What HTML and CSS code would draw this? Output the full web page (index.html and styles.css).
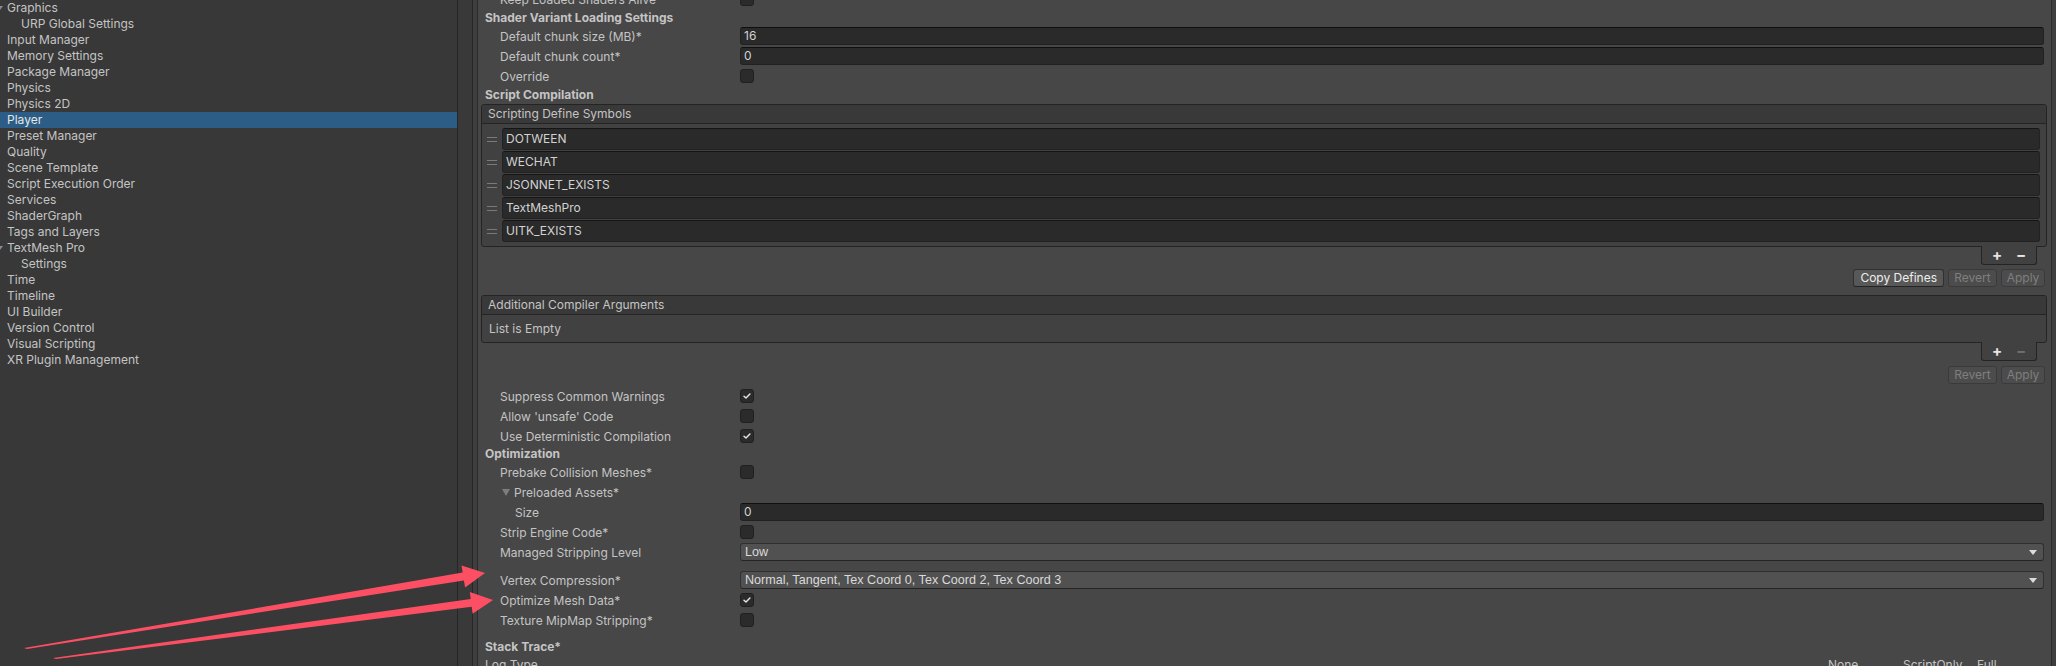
FILE: index.html
```html
<!DOCTYPE html>
<html>
<head>
<meta charset="utf-8">
<link rel="stylesheet" href="styles.css">
</head>
<body>
<div class="window">
  <nav class="sidebar">
    <div class="tree-item open">Graphics</div>
    <div class="tree-item child">URP Global Settings</div>
    <div class="tree-item">Input Manager</div>
    <div class="tree-item">Memory Settings</div>
    <div class="tree-item">Package Manager</div>
    <div class="tree-item">Physics</div>
    <div class="tree-item">Physics 2D</div>
    <div class="tree-item selected">Player</div>
    <div class="tree-item">Preset Manager</div>
    <div class="tree-item">Quality</div>
    <div class="tree-item">Scene Template</div>
    <div class="tree-item">Script Execution Order</div>
    <div class="tree-item">Services</div>
    <div class="tree-item">ShaderGraph</div>
    <div class="tree-item">Tags and Layers</div>
    <div class="tree-item open">TextMesh Pro</div>
    <div class="tree-item child">Settings</div>
    <div class="tree-item">Time</div>
    <div class="tree-item">Timeline</div>
    <div class="tree-item">UI Builder</div>
    <div class="tree-item">Version Control</div>
    <div class="tree-item">Visual Scripting</div>
    <div class="tree-item">XR Plugin Management</div>
  </nav>
  <div class="splitter"><div class="split-a"></div><div class="split-b"></div></div>
  <main class="inspector">
    <div class="content">
      <div class="row"><div class="label ind">Keep Loaded Shaders Alive*</div><div class="value"><span class="checkbox"></span></div></div>
      <div class="section h17">Shader Variant Loading Settings</div>
      <div class="row"><div class="label ind">Default chunk size (MB)*</div><div class="value"><div class="textfield">16</div></div></div>
      <div class="row"><div class="label ind">Default chunk count*</div><div class="value"><div class="textfield">0</div></div></div>
      <div class="row"><div class="label ind">Override</div><div class="value"><span class="checkbox"></span></div></div>
      <div class="section">Script Compilation</div>

      <div class="list-box">
        <div class="list-header">Scripting Define Symbols</div>
        <div class="list-body">
          <div class="list-item"><span class="handle"></span><div class="item-field">DOTWEEN</div></div>
          <div class="list-item"><span class="handle"></span><div class="item-field">WECHAT</div></div>
          <div class="list-item"><span class="handle"></span><div class="item-field">JSONNET_EXISTS</div></div>
          <div class="list-item"><span class="handle"></span><div class="item-field">TextMeshPro</div></div>
          <div class="list-item"><span class="handle"></span><div class="item-field">UITK_EXISTS</div></div>
        </div>
      </div>
      <div class="footer-row"><div class="list-footer"><span class="fbtn">+</span><span class="fbtn">−</span></div></div>
      <div class="button-row">
        <span class="btn">Copy Defines</span>
        <span class="btn disabled w-revert">Revert</span>
        <span class="btn disabled w-apply">Apply</span>
      </div>

      <div class="list-box second">
        <div class="list-header">Additional Compiler Arguments</div>
        <div class="list-empty">List is Empty</div>
      </div>
      <div class="footer-row"><div class="list-footer"><span class="fbtn">+</span><span class="fbtn dim">−</span></div></div>
      <div class="button-row second">
        <span class="btn disabled w-revert">Revert</span>
        <span class="btn disabled w-apply">Apply</span>
      </div>

      <div class="row first-after"><div class="label ind">Suppress Common Warnings</div><div class="value"><span class="checkbox checked"><svg viewBox="0 0 14 14"><path d="M3.5 7.2 L5.8 9.4 L10.4 4.6"/></svg></span></div></div>
      <div class="row"><div class="label ind">Allow 'unsafe' Code</div><div class="value"><span class="checkbox"></span></div></div>
      <div class="row"><div class="label ind">Use Deterministic Compilation</div><div class="value"><span class="checkbox checked"><svg viewBox="0 0 14 14"><path d="M3.5 7.2 L5.8 9.4 L10.4 4.6"/></svg></span></div></div>
      <div class="section h16">Optimization</div>
      <div class="row"><div class="label ind">Prebake Collision Meshes*</div><div class="value"><span class="checkbox"></span></div></div>
      <div class="row"><div class="label ind foldout"><span class="fold-arrow"></span>Preloaded Assets*</div></div>
      <div class="row"><div class="label ind2">Size</div><div class="value"><div class="textfield">0</div></div></div>
      <div class="row"><div class="label ind">Strip Engine Code*</div><div class="value"><span class="checkbox"></span></div></div>
      <div class="row"><div class="label ind">Managed Stripping Level</div><div class="value"><div class="dropdown">Low<span class="dd-arrow"></span></div></div></div>
      <div class="row gap8"><div class="label ind">Vertex Compression*</div><div class="value"><div class="dropdown">Normal, Tangent, Tex Coord 0, Tex Coord 2, Tex Coord 3<span class="dd-arrow"></span></div></div></div>
      <div class="row"><div class="label ind">Optimize Mesh Data*</div><div class="value"><span class="checkbox checked"><svg viewBox="0 0 14 14"><path d="M3.5 7.2 L5.8 9.4 L10.4 4.6"/></svg></span></div></div>
      <div class="row"><div class="label ind">Texture MipMap Stripping*</div><div class="value"><span class="checkbox"></span></div></div>
      <div class="section gap8">Stack Trace*</div>
      <div class="row logtype"><div class="label">Log Type</div><div class="log-cols"><span class="lc none">None</span><span class="lc script">ScriptOnly</span><span class="lc full">Full</span></div></div>
    </div>
  </main>
  <div class="right-edge"></div>
</div>

<svg class="annotations" width="2056" height="666" viewBox="0 0 2056 666">
  <polygon points="24,648 462.7,572.6 461.5,565.6 485,573 465.1,587.4 463.9,580.4 27,649"/>
  <polygon points="53,658 470.7,599 469.8,592 493,600 472.6,613.8 471.7,606.8 56,659"/>
</svg>
</body>
</html>
```

FILE: styles.css
```css
* { box-sizing: border-box; }

html, body {
  margin: 0;
  padding: 0;
}

body {
  width: 2056px;
  height: 666px;
  overflow: hidden;
  position: relative;
  background: #474747;
  font-family: Inter, "Noto Sans", sans-serif;
  font-size: 12px;
  color: #c4c4c4;
}

.window {
  display: flex;
  height: 666px;
}

/* ---------- sidebar ---------- */
.sidebar {
  flex: none;
  width: 457px;
  background: #383838;
}

.tree-item {
  position: relative;
  height: 16px;
  line-height: 16px;
  padding-left: 7px;
  white-space: nowrap;
}

.tree-item.child { padding-left: 21px; }

.tree-item.selected {
  background: #2c5d87;
  color: #e6e6e6;
}

.tree-item.open::before {
  content: "";
  position: absolute;
  left: -3px;
  top: 6px;
  border-left: 3px solid transparent;
  border-right: 3px solid transparent;
  border-top: 4px solid #8c8c8c;
}

/* ---------- splitter ---------- */
.splitter {
  flex: none;
  display: flex;
}

.split-a {
  width: 16px;
  background: #393939;
  border-left: 1px solid #262626;
  border-right: 1px solid #262626;
}

.split-b {
  width: 5px;
  background: #3f3f3f;
  border-right: 1px solid #2a2a2a;
}

.right-edge {
  flex: none;
  width: 5px;
  background: #3e3e3e;
  border-left: 1px solid #2b2b2b;
}

/* ---------- inspector ---------- */
.inspector {
  flex: 1;
  min-width: 0;
  padding: 0 7px;
  overflow: hidden;
}

.content {
  margin-top: -11px;
  display: flex;
  flex-direction: column;
}

.row {
  display: flex;
  align-items: center;
  height: 20px;
  flex: none;
}

.label {
  flex: none;
  width: 255px;
  white-space: nowrap;
}

.label.ind { padding-left: 15px; }
.label.ind2 { padding-left: 30px; }

.label.foldout {
  display: flex;
  align-items: center;
  padding-left: 17px;
}

.fold-arrow {
  width: 0;
  height: 0;
  margin-right: 4px;
  border-left: 4px solid transparent;
  border-right: 4px solid transparent;
  border-top: 7px solid #7d7d7d;
}

.value {
  flex: 1;
  min-width: 0;
  display: flex;
  align-items: center;
}

.section {
  height: 18px;
  line-height: 18px;
  font-weight: 700;
  flex: none;
}

.section.h17 { height: 17px; line-height: 17px; }
.section.h16 { height: 16px; line-height: 16px; }

.gap8 { margin-top: 8px; }
.first-after { margin-top: 2px; }

.textfield {
  flex: 1;
  height: 18px;
  line-height: 16px;
  padding: 0 3px;
  background: #2a2a2a;
  border: 1px solid #212121;
  border-top-color: #0f0f0f;
  border-radius: 3px;
  color: #d2d2d2;
}

.checkbox {
  display: block;
  width: 14px;
  height: 14px;
  background: #2b2b2b;
  border: 1px solid #202020;
  border-radius: 3px;
}

.checkbox svg {
  display: block;
  width: 12px;
  height: 12px;
}

.checkbox svg path {
  fill: none;
  stroke: #e4e4e4;
  stroke-width: 1.7;
  stroke-linecap: round;
  stroke-linejoin: round;
}

.dropdown {
  position: relative;
  flex: 1;
  height: 18px;
  line-height: 16px;
  padding: 0 4px;
  background: #515151;
  border: 1px solid #303030;
  border-bottom-color: #242424;
  border-radius: 3px;
  color: #dadada;
  font-family: "Liberation Sans", Arial, sans-serif;
  font-size: 12.6px;
  white-space: nowrap;
}

.dd-arrow {
  position: absolute;
  right: 6px;
  top: 6px;
  border-left: 4px solid transparent;
  border-right: 4px solid transparent;
  border-top: 5px solid #dcdcdc;
}

/* ---------- reorderable list ---------- */
.list-box {
  flex: none;
  margin: 0 -3px 0 -4px;
  border: 1px solid #242424;
  border-radius: 3px;
  background: #414141;
}

.list-header {
  height: 19px;
  line-height: 18px;
  padding-left: 6px;
  background: #393939;
  border-bottom: 1px solid #242424;
  border-radius: 3px 3px 0 0;
}

.list-body {
  padding: 4px 6px 4px 0;
  display: flex;
  flex-direction: column;
  gap: 1px;
}

.list-item {
  display: flex;
  align-items: center;
  height: 22px;
}

.handle {
  flex: none;
  width: 10px;
  height: 5px;
  margin: 0 5px 0 5px;
  border-top: 1px solid #7a7a7a;
  border-bottom: 1px solid #7a7a7a;
}

.item-field {
  flex: 1;
  height: 22px;
  line-height: 20px;
  padding: 0 3px;
  background: #2a2a2a;
  border: 1px solid #222222;
  border-top-color: #151515;
  border-radius: 3px;
  color: #d2d2d2;
}

.list-empty {
  height: 27px;
  line-height: 27px;
  padding-left: 7px;
}

.footer-row {
  display: flex;
  justify-content: flex-end;
  margin-top: -1px;
  flex: none;
}

.list-footer {
  display: flex;
  width: 56px;
  height: 19px;
  margin-right: 7px;
  padding: 0 3px;
  background: #414141;
  border: 1px solid #242424;
  border-top: none;
  border-radius: 0 0 3px 3px;
}

.fbtn {
  width: 25px;
  text-align: center;
  line-height: 18px;
  font-size: 15px;
  font-weight: 700;
  color: #e6e6e6;
}

.fbtn.dim { color: #6f6f6f; }

.button-row {
  display: flex;
  justify-content: flex-end;
  gap: 4px;
  margin: 4px -1px 0 0;
  flex: none;
}

.button-row.second { margin-top: 5px; }

.list-box.second { margin-top: 8px; }

.btn {
  height: 18px;
  line-height: 16px;
  padding: 0 6px;
  background: #585858;
  border: 1px solid #303030;
  border-bottom-color: #242424;
  border-radius: 3px;
  color: #eeeeee;
  text-align: center;
  white-space: nowrap;
}

.btn.disabled {
  background: #4c4c4c;
  border-color: #3a3a3a;
  color: #7f7f7f;
}

.btn.w-revert { width: 49px; padding: 0; }
.btn.w-apply { width: 44px; padding: 0; }

/* ---------- log type ---------- */
.logtype { height: 16px; }

.log-cols {
  display: flex;
  margin-left: auto;
  padding-right: 47px;
}

.lc { white-space: nowrap; }
.lc.none { width: 75px; }
.lc.script { width: 74px; }
.lc.full { width: 20px; }

/* ---------- annotations ---------- */
.annotations {
  position: absolute;
  left: 0;
  top: 0;
  pointer-events: none;
}

.annotations polygon {
  fill: #fd4f63;
}
```
